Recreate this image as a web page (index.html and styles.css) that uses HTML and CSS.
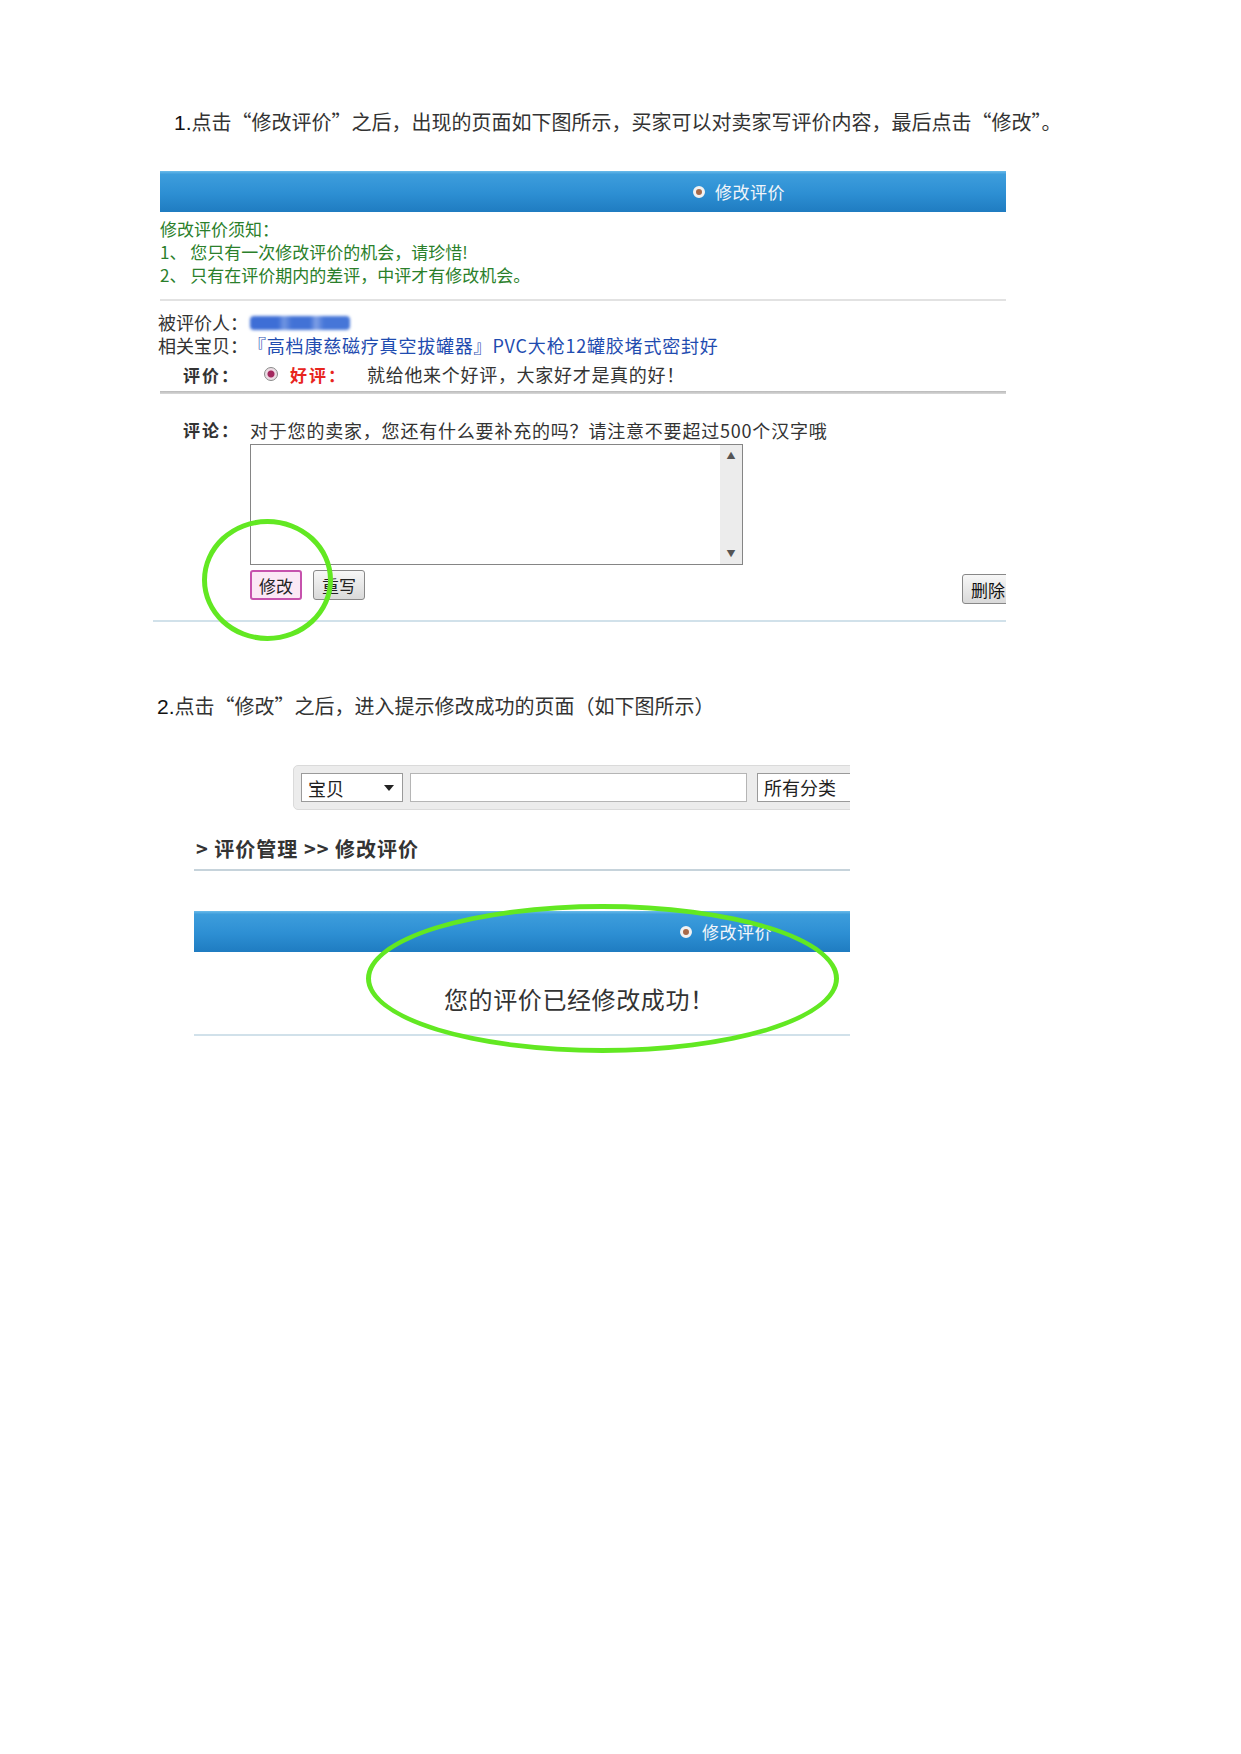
FILE: index.html
```html
<!DOCTYPE html>
<html lang="zh-CN">

<head>
    <meta charset="UTF-8">
    <meta name="viewport" content="width=device-width, initial-scale=1.0">
    <title>修改评价</title>
    <link rel="stylesheet" href="styles.css">
</head>

<body>
    <p class="step step-one"><span class="num">1.</span>点击“修改评价”之后，出现的页面如下图所示，买家可以对卖家写评价内容，最后点击“修改”。</p>

    <div class="shot shot-edit">
        <div class="bar bar-edit"><span class="bar-title"><i class="dot"></i>修改评价</span></div>

        <div class="notice">
            <div>修改评价须知：</div>
            <div>1、 您只有一次修改评价的机会，请珍惜!</div>
            <div>2、 只有在评价期内的差评，中评才有修改机会。</div>
        </div>
        <div class="rule rule-light"></div>

        <div class="info">
            <div class="row">被评价人：<span class="blur"></span></div>
            <div class="row">相关宝贝：<a class="item-link" href="#">『高档康慈磁疗真空拔罐器』PVC大枪12罐胶堵式密封好</a></div>
            <div class="row row-rate">
                <b class="label">评价：</b>
                <span class="radio"></span>
                <b class="good">好评：</b>
                <span class="rate-text">就给他来个好评，大家好才是真的好！</span>
            </div>
        </div>
        <div class="rule rule-dark"></div>

        <div class="comment">
            <b class="label">评论：</b>
            <div class="comment-body">
                <div class="hint">对于您的卖家，您还有什么要补充的吗？请注意不要超过500个汉字哦</div>
                <div class="textbox">
                    <textarea></textarea>
                    <div class="scroll"><span>▲</span><span>▼</span></div>
                </div>
                <div class="buttons">
                    <button class="btn btn-edit">修改</button>
                    <button class="btn">重写</button>
                    <button class="btn btn-delete">删除</button>
                </div>
            </div>
        </div>
        <div class="rule rule-blue rule-end"></div>

        <!-- green marker drawn over the screenshot -->
        <div class="mark mark-edit"></div>
    </div>

    <p class="step step-two"><span class="num">2.</span>点击“修改”之后，进入提示修改成功的页面（如下图所示）</p>

    <div class="shot shot-done">
        <div class="search">
            <div class="select">宝贝<span class="caret"></span></div>
            <input type="text" class="keyword">
            <div class="category">所有分类</div>
        </div>
        <div class="crumb">&gt; 评价管理 &gt;&gt; 修改评价</div>
        <div class="rule rule-blue rule-crumb"></div>

        <div class="bar bar-done"><span class="bar-title"><i class="dot"></i>修改评价</span></div>
        <div class="success">您的评价已经修改成功！</div>
        <div class="rule rule-blue rule-done"></div>

        <div class="mark mark-done"></div>
    </div>
</body>

</html>
```

FILE: styles.css
```css
body {
    margin: 0;
    font-family: "Noto Sans CJK SC", sans-serif;
    color: #222;
    background-color: #ffffff;
}

/* instruction lines */
.step {
    margin: 0;
    font-size: 20px;
    line-height: 28px;
    color: #333;
}

.step-one {
    padding: 108px 0 0 174px;
}

.step-two {
    margin-top: 50px;
    padding-left: 157px;
}

.num {
    font-family: "Liberation Sans", Arial, sans-serif;
    font-size: 21px;
    color: #111;
}

/* screenshots */
.shot {
    position: relative;
    overflow: hidden;
    padding-bottom: 20px;
}

.shot-edit {
    margin: 34px 0 0 153px;
    width: 853px;
}

.shot-done {
    margin: 44px 0 0 194px;
    width: 656px;
}

.bar {
    height: 41px;
    display: flex;
    align-items: center;
    background: linear-gradient(#6bbbea 0, #3d9ddc 8%, #2d8fd3 55%, #1f7cc1 100%);
    color: #f2f6fa;
    font-size: 17px;
}

.bar-edit {
    margin-left: 7px;
    padding-left: 533px;
}

.bar-done {
    margin-top: 40px;
    padding-left: 486px;
}

.bar-title {
    display: flex;
    align-items: center;
    gap: 10px;
    letter-spacing: 0.5px;
}

.dot {
    width: 6px;
    height: 6px;
    border-radius: 50%;
    background-color: #a86a4a;
    border: 3px solid #f2f2f2;
}

.rule {
    height: 2px;
}

.rule-light {
    margin: 13px 0 0 7px;
    background-color: #e2e2e2;
}

.rule-dark {
    margin: 3px 0 0 7px;
    height: 3px;
    background: linear-gradient(#b9b9b9, #d9d9d9);
}

.rule-blue {
    background-color: #d1e1ea;
}

.rule-end {
    margin-top: 16px;
}

.rule-crumb {
    margin-top: 7px;
    background-color: #c6d3db;
}

.rule-done {
    margin-top: 18px;
}

.notice {
    margin: 5px 0 0 7px;
    font-size: 17px;
    line-height: 23px;
    color: #2b7f2b;
}

.info {
    margin-top: 10px;
    font-size: 18px;
    line-height: 23px;
    color: #333;
}

.row {
    display: flex;
    align-items: center;
    padding-left: 5px;
}

.blur {
    width: 100px;
    height: 14px;
    margin-left: 2px;
    border-radius: 4px;
    background: linear-gradient(90deg, #3e6ed6 0, #3e6ed6 28%, #7196e2 34%, #4272d6 42%, #4272d6 60%, #80a0e6 66%, #4676d8 74%, #4676d8 100%);
    filter: blur(1.5px);
}

.item-link {
    color: #1f4cb0;
    text-decoration: none;
    letter-spacing: 0.8px;
}

.row-rate {
    margin-top: 3px;
    height: 28px;
    padding-left: 30px;
}

.label {
    font-size: 17px;
    font-weight: bold;
    color: #333;
    letter-spacing: 2px;
}

.radio {
    width: 14px;
    height: 14px;
    margin-left: 24px;
    box-sizing: border-box;
    border-radius: 50%;
    border: 1px solid #8a8a8a;
    background: radial-gradient(circle, #a3285e 0, #a3285e 3px, #f0d8e4 4px, #e4e4e4 7px);
}

.good {
    margin-left: 12px;
    font-size: 17px;
    color: #e8251e;
    letter-spacing: 2px;
}

.rate-text {
    margin-left: 20px;
    letter-spacing: 0.7px;
}

/* comment form */
.comment {
    display: flex;
    margin-top: 24px;
    padding-left: 30px;
    font-size: 18px;
}

.comment .label {
    flex: none;
    width: 67px;
    line-height: 24px;
}

.comment-body {
    flex: 1;
}

.hint {
    line-height: 24px;
    color: #333;
    letter-spacing: 0.8px;
}

.textbox {
    display: flex;
    width: 493px;
    height: 121px;
    margin-top: 2px;
    box-sizing: border-box;
    border: 1px solid #858585;
}

.textbox textarea {
    flex: 1;
    margin: 0;
    padding: 0;
    border: none;
    outline: none;
    resize: none;
}

.scroll {
    display: flex;
    flex-direction: column;
    justify-content: space-between;
    align-items: center;
    width: 22px;
    padding: 4px 0;
    box-sizing: border-box;
    background-color: #ececec;
    font-size: 9px;
    color: #555;
}

.buttons {
    display: flex;
    align-items: flex-start;
    gap: 11px;
    margin-top: 5px;
}

.btn {
    width: 52px;
    height: 30px;
    padding: 0;
    font-family: inherit;
    font-size: 17px;
    color: #222;
    border: 1px solid #888;
    border-radius: 3px;
    background: linear-gradient(#f7f7f7, #d9d9d9);
}

.btn-edit {
    border: 2px solid #c652ad;
    background: #fbe8f5;
}

.btn-delete {
    margin: 4px -8px 0 auto;
    color: #111;
}

/* second screenshot */
.search {
    display: flex;
    align-items: flex-start;
    width: 570px;
    height: 45px;
    margin-left: 99px;
    padding: 7px 0 0 7px;
    box-sizing: border-box;
    background-color: #ececec;
    border: 1px solid #dadada;
    border-radius: 5px;
}

.select,
.category {
    flex: none;
    height: 29px;
    box-sizing: border-box;
    border: 1px solid #9a9a9a;
    background-color: #fff;
    font-size: 18px;
    color: #222;
}

.select {
    display: flex;
    align-items: center;
    justify-content: space-between;
    width: 102px;
    padding: 0 8px 0 6px;
}

.caret {
    border-left: 5px solid transparent;
    border-right: 5px solid transparent;
    border-top: 6px solid #222;
}

.keyword {
    flex: none;
    width: 337px;
    height: 29px;
    margin: 0 0 0 7px;
    padding: 0;
    box-sizing: border-box;
    border: 1px solid #b5b5b5;
}

.category {
    width: 100px;
    margin-left: 10px;
    padding-left: 6px;
    line-height: 27px;
}

.crumb {
    margin-top: 26px;
    padding-left: 2px;
    font-size: 20px;
    line-height: 26px;
    font-weight: bold;
    color: #333;
    letter-spacing: 1px;
}

.success {
    margin-top: 30px;
    padding-left: 250px;
    font-size: 24px;
    line-height: 34px;
    color: #333;
    letter-spacing: 0.6px;
}

.mark {
    position: absolute;
    box-sizing: border-box;
    border: 5px solid #62e822;
    border-radius: 50%;
}

.mark-edit {
    left: 49px;
    top: 348px;
    width: 131px;
    height: 122px;
}

.mark-done {
    left: 172px;
    top: 139px;
    width: 473px;
    height: 149px;
}
```
